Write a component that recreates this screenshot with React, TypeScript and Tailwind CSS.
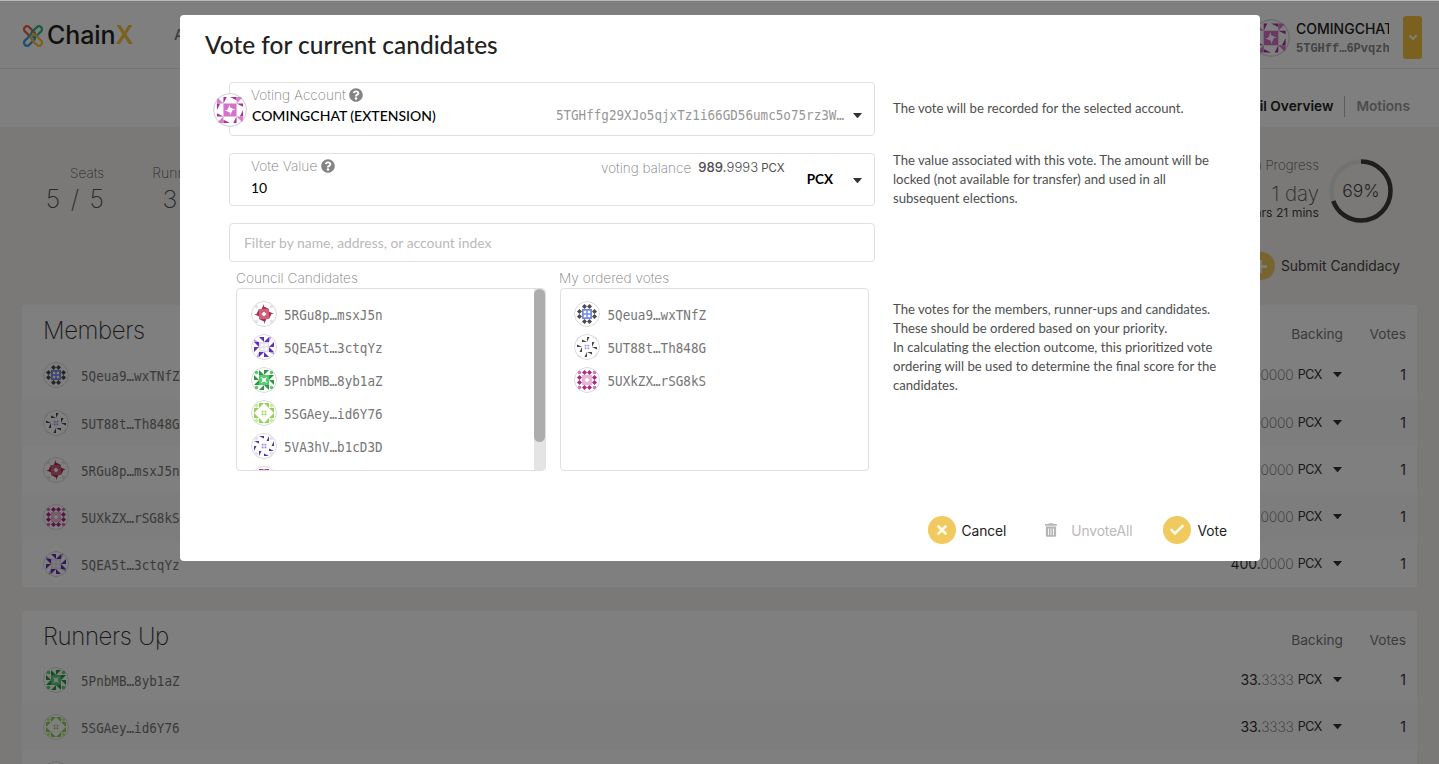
import React from 'react';

type Icon = { side: number; sideRot: number; corner: number; cornerRot: number; center: number; sc: string; cc: string; mc: string };

const ICONS: Record<string, Icon> = {
  account: { side: 1, sideRot: 1, corner: 0, cornerRot: 0, center: 0, sc: '#a8329a', cc: '#d57fcd', mc: '#d373c9' },
  '5RGu8p…msxJ5n': { side: 1, sideRot: 3, corner: 3, cornerRot: 0, center: 8, sc: '#a9324f', cc: '#e2e2e2', mc: '#cf5f7c' },
  '5QEA5t…3ctqYz': { side: 0, sideRot: 2, corner: 1, cornerRot: 0, center: 9, sc: '#5f2fb8', cc: '#b79be6', mc: '#e3e1e8' },
  '5PnbMB…8yb1aZ': { side: 0, sideRot: 0, corner: 3, cornerRot: 0, center: 6, sc: '#2c9741', cc: '#5cc873', mc: '#56cb70' },
  '5SGAey…id6Y76': { side: 0, sideRot: 1, corner: 2, cornerRot: 0, center: 2, sc: '#93d150', cc: '#cbe8ac', mc: '#93d150' },
  '5VA3hV…b1cD3D': { side: 1, sideRot: 2, corner: 3, cornerRot: 0, center: 2, sc: '#4a2fb5', cc: '#e4e4e4', mc: '#9c8ae0' },
  '5Qeua9…wxTNfZ': { side: 2, sideRot: 0, corner: 3, cornerRot: 0, center: 9, sc: '#4b4b4b', cc: 'none', mc: '#7388e4' },
  '5UT88t…Th848G': { side: 1, sideRot: 0, corner: 1, cornerRot: 1, center: 2, sc: '#454545', cc: '#d9d4f1', mc: '#a795ea' },
  '5UXkZX…rSG8kS': { side: 2, sideRot: 0, corner: 3, cornerRot: 0, center: 8, sc: '#ab2b80', cc: '#d973b4', mc: '#e8b5d6' },
  last: { side: 0, sideRot: 1, corner: 3, cornerRot: 0, center: 6, sc: '#a23aa8', cc: '#dddddd', mc: '#c978cd' },
};

const OUTER = ['M0 0L10 10H0Z', 'M0 5L0 10H10Z', 'M5 0L10 5L5 10L0 5Z', 'M5 1.4A3.6 3.6 0 1 1 5 8.6A3.6 3.6 0 1 1 5 1.4Z'];
const CENTER: Record<number, string> = {
  0: 'M0 0H10V1.6L5.8 10H0Z',
  2: 'M5.4 5.4H9V9H5.4Z',
  6: 'M0 0H10V7L4 4L7 10H0Z',
  8: 'M0 0H10V5L5 10H0Z',
  9: 'M0 0H10V10H0ZM3.5 3.5V8.6H8.6V3.5Z',
};
const SIDES = [[1, 0], [2, 0], [2, 3], [1, 3], [0, 1], [3, 1], [3, 2], [0, 2]];
const CORNERS = [[0, 0], [3, 0], [3, 3], [0, 3]];
const CENTERS = [[1, 1], [2, 1], [2, 2], [1, 2]];

function place([x, y]: number[], turn: number) {
  return `translate(${x * 10} ${y * 10}) rotate(${(turn % 4) * 90} 5 5)`;
}

function Identicon({ id, size = 26 }: { id: string; size?: number }) {
  const c = ICONS[id];
  return (
    <svg width={size} height={size} viewBox="-6 -6 52 52" className="shrink-0 rounded-full">
      <circle cx="20" cy="20" r="25" fill="#fff" stroke="#d6d6d6" strokeWidth="2" />
      {SIDES.map((p, i) => <path key={i} d={OUTER[c.side]} fill={c.sc} transform={place(p, i + c.sideRot)} />)}
      {CORNERS.map((p, i) => <path key={i} d={OUTER[c.corner]} fill={c.cc} transform={place(p, i + c.cornerRot)} />)}
      {CENTERS.map((p, i) => <path key={i} d={CENTER[c.center]} fill={c.mc} fillRule="evenodd" transform={place(p, i)} />)}
    </svg>
  );
}

function Caret({ className = '' }: { className?: string }) {
  return <svg width="9" height="5" viewBox="0 0 9 5" className={className}><path d="M.5 0h8q.5.2.2.6L5 4.7q-.5.4-1 0L.3.6Q0 .2.5 0Z" fill="currentColor" /></svg>;
}

function Help() {
  return (
    <svg width="14" height="14" viewBox="0 0 512 512" className="-mt-px text-[#848484]">
      <path fill="currentColor" d="M504 256c0 137-111 248-248 248S8 393 8 256C8 119.100 119 8 256 8s248 111.100 248 248zM262.700 90c-54.500 0-89.300 23-116.500 63.800-3.500 5.300-2.400 12.400 2.700 16.300l34.700 26.300c5.200 3.900 12.600 3 16.700-2.100 17.900-22.700 30.100-35.800 57.300-35.800 20.400 0 45.700 13.100 45.700 33 0 15-12.400 22.700-32.500 34C247.100 238.500 216 254.900 216 296v4c0 6.600 5.400 12 12 12h56c6.600 0 12-5.400 12-12v-1.300c0-28.500 83.200-29.600 83.200-106.700 0-58-60.200-102-116.500-102zM256 338c-25.400 0-46 20.600-46 46 0 25.400 20.600 46 46 46s46-20.600 46-46c0-25.400-20.600-46-46-46z" />
    </svg>
  );
}

function Address({ id, gap }: { id: string; gap: string }) {
  return (
    <div className={`flex items-center ${gap}`}>
      <Identicon id={id} />
      <span className="scale-y-[1.1] pt-[2px] font-['DejaVu_Sans_Mono',monospace] text-[12.6px] leading-[18px] text-[#757575]">{id}</span>
    </div>
  );
}

function Logo() {
  return (
    <svg width="24" height="24" viewBox="0 0 24 24" fill="none" strokeWidth="2.3">
      <rect x="2" y="4.700" width="13" height="6" rx="3" stroke="#f0604a" transform="rotate(45 8.500 7.700)" />
      <rect x="9" y="4.700" width="13" height="6" rx="3" stroke="#35b795" transform="rotate(-45 15.500 7.700)" />
      <rect x="2" y="13.300" width="13" height="6" rx="3" stroke="#3f9bdc" transform="rotate(-45 8.500 16.300)" />
      <rect x="9" y="13.300" width="13" height="6" rx="3" stroke="#f5c33c" transform="rotate(45 15.500 16.300)" />
    </svg>
  );
}

function CouncilTable({ title, rows, first }: { title: string; first: string; rows: [string, string, string][] }) {
  return (
    <section className="mx-[21px] shrink-0 overflow-hidden rounded-[4px] border border-[#f6f4f2] bg-white">
      <div className="flex h-[45px] items-end">
        <h2 className="flex-1 pb-px pl-[21px] text-[24px] leading-[36px] font-extralight tracking-[-0.4px] text-[#333]">{title}</h2>
        <span className="w-[80px] pb-[5px] text-right text-[13.700px] text-[#777]">Backing</span>
        <span className="w-[74px] pr-[11px] pb-[5px] text-right text-[13.700px] text-[#777]">Votes</span>
      </div>
      {rows.map(([id, whole, frac], i) => (
        <div key={id} className={`flex items-center pl-[21px] text-[14px] text-[#333] ${i === 0 ? first : 'h-[47px]'} ${i % 2 ? 'bg-[#fafafa]' : 'bg-white'}`}>
          <Address id={id} gap="gap-[12px]" />
          <div className="flex flex-1 items-center justify-end">
            <span className="tracking-[-0.1px]">{whole}.</span>
            <span className="font-extralight tracking-[-0.2px] text-[#666]">{frac}</span>
            <span className="ml-1 pt-px text-[12.5px] tracking-[-0.4px]">PCX</span>
            <Caret className="ml-[11px]" />
          </div>
          <span className="w-[75px] pr-[11px] text-right">1</span>
        </div>
      ))}
    </section>
  );
}

function Round({ children }: { children: React.ReactNode }) {
  return <span className="flex h-7 w-7 shrink-0 items-center justify-center rounded-full bg-[#f0c95f]">{children}</span>;
}

function Page() {
  return (
    <div className="flex h-full flex-col bg-[#f5f3f1]">
      <header className="flex h-[69px] shrink-0 items-center border-b border-[#e6e6e6] bg-white pt-[3px] pl-[21px]">
        <Logo />
        <span className="ml-[2px] w-[87px] text-[25px] font-medium tracking-[-0.1px] text-[#222]">Chain<span className="font-semibold text-[#f5c23a]">X</span></span>
        <span className="ml-10 flex-1 text-[15px] font-medium text-[#777]">Accounts</span>
        <span className="mt-[4px]"><Identicon id="account" size={38} /></span>
        <div className="mt-[6px] ml-[6px] w-[93px] overflow-hidden">
          <div className="text-[14px] leading-[20px] font-medium whitespace-nowrap text-[#222]">COMINGCHAT (EXTENSION)</div>
          <div className="pt-px font-['Liberation_Mono',monospace] text-[12px] leading-[19px] font-bold whitespace-nowrap text-[#888]">5TGHff…6Pvqzh</div>
        </div>
        <div className="mt-[3px] mr-[17px] ml-[14px] flex h-[43px] w-[19px] items-center justify-center rounded-[3px] bg-[#f5c33f]">
          <svg width="10" height="7" viewBox="0 0 10 7"><path d="M1.500 1.500L5 5L8.500 1.500" fill="none" stroke="#fff" strokeWidth="2" /></svg>
        </div>
      </header>
      <nav className="flex h-[58px] shrink-0 items-center justify-end bg-white pt-[17px] pr-[29px] text-[13.7px] font-semibold">
        <span className="text-[#222]">Council Overview</span>
        <span className="mx-[11px] h-[21px] w-px bg-[#bbb]" />
        <span className="text-[#999]">Motions</span>
      </nav>
      <div className="flex h-[100px] shrink-0 items-start pt-[32px] pr-[46px] pl-[22px]">
        <div className="w-[82px] pt-[4px] text-right font-extralight text-[#555]">
          <div className="text-[13.500px] leading-5">Seats</div>
          <div className="text-[25px] leading-8 [word-spacing:3.500px]">5 / 5</div>
        </div>
        <div className="ml-12 w-[76px] pt-[4px] text-right font-extralight whitespace-nowrap text-[#555]">
          <div className="pr-[2px] text-[14px] leading-5">Runners up</div>
          <div className="text-[25px] leading-8 [word-spacing:2px]">3 / 19</div>
        </div>
        <div className="flex-1" />
        <div className="-mt-[4px] mr-[10px] text-right text-[#555]">
          <div className="text-[13.300px] leading-5 font-extralight">Term Progress</div>
          <div className="pt-[4px] text-[20.500px] leading-[30px] font-extralight">1 day</div>
          <div className="text-[12.2px] leading-[7px] text-[#444]">17 hrs 21 mins</div>
        </div>
        <div className="relative h-[64px] w-[64px]">
          <svg width="64" height="64" viewBox="0 0 64 64" fill="none">
            <circle cx="32" cy="32" r="29.500" stroke="#e5e4e2" strokeWidth="4.500" />
            <circle cx="32" cy="32" r="29.500" stroke="#3c3c3c" strokeWidth="4.500" pathLength="100" strokeDasharray="69.500 100" transform="rotate(-90 32 32)" />
          </svg>
          <span className="absolute inset-0 flex items-center justify-center text-[17.5px] font-light text-[#444]">69%</span>
        </div>
      </div>
      <div className="flex h-[77px] shrink-0 items-center justify-end gap-[6px] pt-px pr-[39px] text-[13.850px] text-[#444]">
        <Round><svg width="13" height="13" viewBox="0 0 13 13"><path d="M6.500 0V13M0 6.500H13" stroke="#fff" strokeWidth="2.500" /></svg></Round>
        Submit Candidacy
      </div>
      <CouncilTable title="Members" first="h-[49px]" rows={[
        ['5Qeua9…wxTNfZ', '400', '0000'], ['5UT88t…Th848G', '400', '0000'], ['5RGu8p…msxJ5n', '400', '0000'],
        ['5UXkZX…rSG8kS', '400', '0000'], ['5QEA5t…3ctqYz', '400', '0000']]} />
      <div className="h-[22px] shrink-0" />
      <CouncilTable title="Runners Up" first="h-[47px]" rows={[
        ['5PnbMB…8yb1aZ', '33', '3333'], ['5SGAey…id6Y76', '33', '3333'], ['5VA3hV…b1cD3D', '33', '3333']]} />
    </div>
  );
}

function Modal() {
  const left = ['5RGu8p…msxJ5n', '5QEA5t…3ctqYz', '5PnbMB…8yb1aZ', '5SGAey…id6Y76', '5VA3hV…b1cD3D'];
  const right = ['5Qeua9…wxTNfZ', '5UT88t…Th848G', '5UXkZX…rSG8kS'];
  const label = 'text-[13.7px] leading-[17px] font-extralight text-[#7c7c7c]';
  return (
    <div className="absolute top-[15px] left-[180px] flex h-[546px] w-[1080px] flex-col rounded-[4px] bg-white font-[Lato,sans-serif] text-[14px] text-[#4e4e4e]">
      <h1 className="h-[67px] pt-[15px] pl-[25px] text-[24.450px] leading-[30px] font-medium text-[#222]">Vote for current candidates</h1>
      <div className="flex pl-[49px]">
        <div className="w-[646px]">
          <div className="relative flex h-[54px] rounded-[4px] border border-[#e0e0e0] pl-[21px]">
            <span className="absolute top-[10px] -left-[17px]"><Identicon id="account" size={34} /></span>
            <div className="flex-1">
              <div className={`flex h-[24px] items-center gap-[3px] font-[Inter,sans-serif] ${label}`}>Voting Account <Help /></div>
              <div className="pl-[1px] text-[14px] leading-[17px] font-medium text-black">COMINGCHAT (EXTENSION)</div>
            </div>
            <div className="flex items-center gap-[9px] pt-[13px] pr-[12px]">
              <span className="scale-y-[1.1] pt-[2px] font-['DejaVu_Sans_Mono',monospace] text-[12.6px] text-[#969696]">5TGHffg29XJo5qjxTz1i66GD56umc5o75rz3W…</span>
              <Caret className="text-[#333]" />
            </div>
          </div>
          <div className="mt-[17px] flex h-[53px] rounded-[4px] border border-[#e0e0e0] pl-[21px]">
            <div className="flex-1">
              <div className={`flex h-[25px] items-center gap-[4px] font-[Inter,sans-serif] ${label}`}>Vote Value <Help /></div>
              <div className="leading-[17px] text-black">10</div>
            </div>
            <div className="flex h-[28px] items-center font-[Inter,sans-serif] text-[13.5px]">
              <span className="font-extralight text-[#777]">voting balance</span>
              <span className="ml-[7px] text-[13.100px] font-medium">989.</span><span className="text-[13.100px] font-light">9993</span>
              <span className="ml-[3px] pt-px text-[11.500px]">PCX</span>
            </div>
            <b className="mt-[17px] ml-[22px] text-[13.500px] leading-[17px] text-black">PCX</b>
            <Caret className="mt-[24px] mr-[12px] ml-[20px] text-[#333]" />
          </div>
          <div className="mt-[17px] flex h-[39px] items-center rounded-[4px] border border-[#e0e0e0] pt-px pl-[14px] text-[13.9px] text-[#b9b9b9]">Filter by name, address, or account index</div>
          <div className="flex gap-[14px] pt-[8px] pl-[7px]">
            <div className="w-[310px]">
              <div className={`h-[18px] font-[Inter,sans-serif] ${label}`}>Council Candidates</div>
              <div className="flex h-[183px] justify-between overflow-hidden rounded-[4px] border border-[#e0e0e0]">
                <div className="flex flex-col gap-[7.200px] pt-[11.500px] pl-[13.500px]">
                  {left.map((id) => <Address key={id} id={id} gap="gap-[7.500px]" />)}
                  <Identicon id="last" />
                </div>
                <div className="h-full w-[11px] bg-[#e4e4e4]"><div className="h-[153px] rounded-full bg-[#adadad]" /></div>
              </div>
            </div>
            <div className="w-[309px]">
              <div className={`-ml-px h-[18px] font-[Inter,sans-serif] ${label}`}>My ordered votes</div>
              <div className="flex h-[183px] flex-col gap-[7.200px] rounded-[4px] border border-[#e0e0e0] pt-[11.500px] pl-[12.500px]">
                {right.map((id) => <Address key={id} id={id} gap="gap-[8px]" />)}
              </div>
            </div>
          </div>
        </div>
        <div className="ml-[18px] w-[350px] text-[13.130px] leading-[19px] whitespace-nowrap">
          <p className="pt-[17px]">The vote will be recorded for the selected account.</p>
          <p className="pt-[33px]">The value associated with this vote. The amount will be<br />locked (not available for transfer) and used in all<br />subsequent elections.</p>
          <p className="pt-[92px]">The votes for the members, runner-ups and candidates.<br />These should be ordered based on your priority.<br />In calculating the election outcome, this prioritized vote<br />ordering will be used to determine the final score for the<br />candidates.</p>
        </div>
      </div>
      <div className="mt-[45px] flex items-center justify-end pr-[33px] font-[Inter,sans-serif] text-[13.8px] text-[#222]">
        <Round><svg width="12" height="12" viewBox="0 0 12 12"><path d="M2.500 2.500L9.500 9.500M9.500 2.500L2.500 9.500" stroke="#fffbe8" strokeWidth="2.600" strokeLinecap="round" /></svg></Round>
        <span className="ml-[6px] pt-[2px] tracking-[-0.1px]">Cancel</span>
        <svg width="12" height="14" viewBox="0 0 448 512" className="ml-[39px] text-[#b5b5b5]"><path fill="currentColor" d="M32 464a48 48 0 0 0 48 48h288a48 48 0 0 0 48-48V128H32zm272-256a16 16 0 0 1 32 0v224a16 16 0 0 1-32 0zm-96 0a16 16 0 0 1 32 0v224a16 16 0 0 1-32 0zm-96 0a16 16 0 0 1 32 0v224a16 16 0 0 1-32 0zM432 32H312l-9.400-18.700A24 24 0 0 0 281.100 0H166.800a23.700 23.700 0 0 0-21.400 13.300L136 32H16A16 16 0 0 0 0 48v32a16 16 0 0 0 16 16h416a16 16 0 0 0 16-16V48a16 16 0 0 0-16-16z" /></svg>
        <span className="ml-[14px] pt-[2px] tracking-[-0.1px] text-[#bababa]">UnvoteAll</span>
        <span className="ml-[31px]"><Round><svg width="14" height="12" viewBox="0 0 14 12"><path d="M1.500 6L5 9.500L12.500 2" fill="none" stroke="#fffbe8" strokeWidth="2.600" strokeLinecap="round" /></svg></Round></span>
        <span className="ml-[6px] pt-[2px]">Vote</span>
      </div>
    </div>
  );
}

export default function App() {
  return (
    <div className="relative h-[764px] w-[1439px] overflow-hidden font-[Inter,sans-serif]">
      <Page />
      <div className="absolute inset-0 bg-black/50" />
      <div className="absolute inset-x-0 top-0 h-px bg-[#b4bcba]" />
      <Modal />
    </div>
  );
}
